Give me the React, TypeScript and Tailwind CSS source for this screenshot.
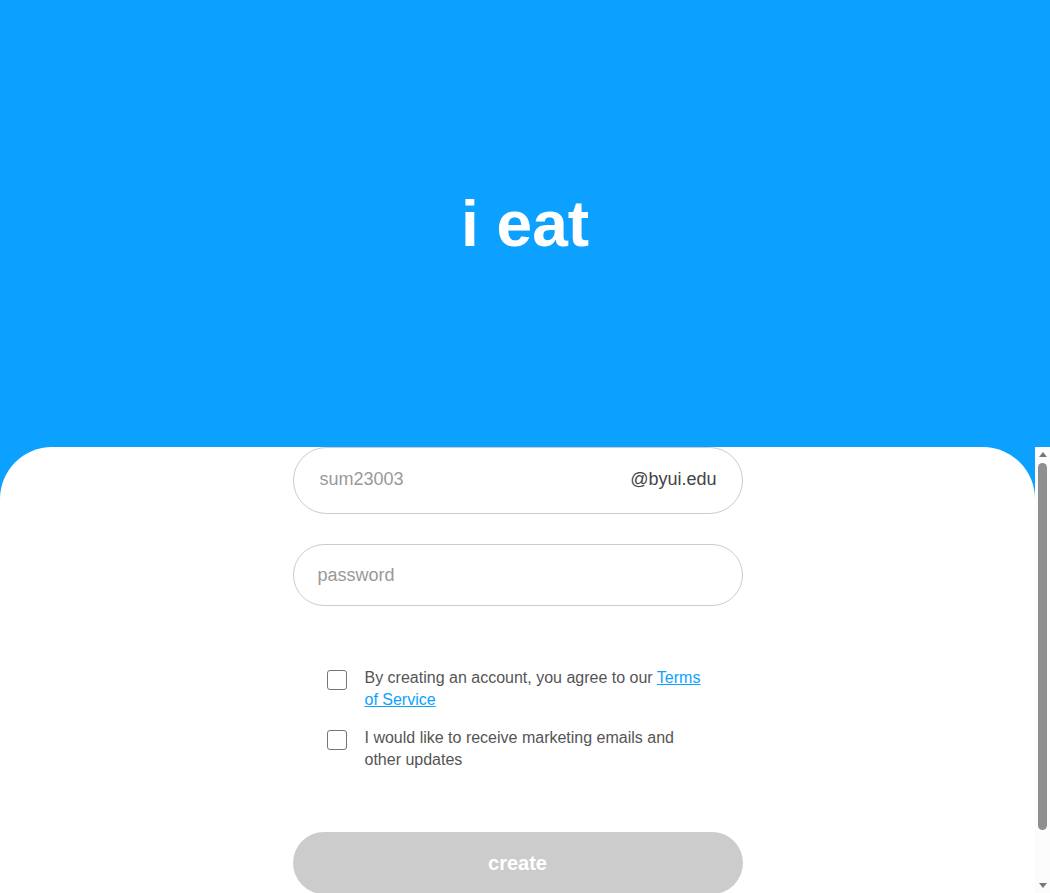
import React, { useState } from 'react';

const THUMB_HEIGHT = 367;
const TRACK_HEIGHT = 414;

const App: React.FC = () => {
  const [email, setEmail] = useState('');
  const [password, setPassword] = useState('');
  const [terms, setTerms] = useState(false);
  const [marketing, setMarketing] = useState(false);
  const [scrollRatio, setScrollRatio] = useState(0);

  const canCreate = email.trim() !== '' && password !== '' && terms;

  const handleScroll = (event: React.UIEvent<HTMLDivElement>) => {
    const el = event.currentTarget;
    const max = el.scrollHeight - el.clientHeight;
    setScrollRatio(max > 0 ? el.scrollTop / max : 0);
  };

  return (
    <div className="h-screen flex flex-col bg-[#0ca1ff] font-['Liberation_Sans',Arial,sans-serif]">
      <header className="h-[447px] shrink-0 flex items-center justify-center">
        <h1 className="text-[64px] font-bold text-white leading-none">i eat</h1>
      </header>
      <div className="flex-1 min-h-0 flex">
        <div onScroll={handleScroll} className="flex-1 overflow-y-auto [scrollbar-width:none]">
          <div className="bg-white rounded-t-[52px] min-h-full flex flex-col items-center pb-[60px]">
            <div className="w-[450px] flex flex-col">
              <div className="h-[67px] rounded-full border border-[#cccccc] flex items-center pl-[26px] pr-[25px] pb-[2px]">
                <input
                  type="text"
                  value={email}
                  onChange={event => setEmail(event.target.value)}
                  placeholder="sum23003"
                  className="flex-1 min-w-0 bg-transparent outline-none text-[18px] text-[#444] placeholder:text-[#999]"
                />
                <span className="text-[18px] text-[#444]">@byui.edu</span>
              </div>
              <input
                type="password"
                value={password}
                onChange={event => setPassword(event.target.value)}
                placeholder="password"
                className="mt-[30px] h-[62px] rounded-full border border-[#cccccc] px-[24px] outline-none text-[18px] text-[#444] placeholder:text-[#999]"
              />
              <div className="mt-[61px] flex flex-col gap-[16px] pl-[34px] pr-[36px]">
                <label className="flex items-start gap-[18px] text-[16px] leading-[22px] text-[#555]">
                  <input
                    type="checkbox"
                    checked={terms}
                    onChange={event => setTerms(event.target.checked)}
                    className="appearance-none shrink-0 mt-[3px] w-[20px] h-[20px] rounded-[3px] border border-[#767676] bg-white checked:bg-[#0ca1ff] checked:border-[#0ca1ff]"
                  />
                  <span>
                    By creating an account, you agree to our{' '}
                    <a href="#" className="text-[#0ca1ff] underline">Terms of Service</a>
                  </span>
                </label>
                <label className="flex items-start gap-[18px] text-[16px] leading-[22px] text-[#555]">
                  <input
                    type="checkbox"
                    checked={marketing}
                    onChange={event => setMarketing(event.target.checked)}
                    className="appearance-none shrink-0 mt-[3px] w-[20px] h-[20px] rounded-[3px] border border-[#767676] bg-white checked:bg-[#0ca1ff] checked:border-[#0ca1ff]"
                  />
                  <span>I would like to receive marketing emails and other updates</span>
                </label>
              </div>
              <button
                type="button"
                disabled={!canCreate}
                className="mt-[61px] h-[62px] rounded-full bg-[#cccccc] text-white text-[20px] font-bold enabled:bg-[#0ca1ff]"
              >
                create
              </button>
            </div>
          </div>
        </div>
        {/* scrollbar */}
        <div className="w-[15px] shrink-0 bg-[#fcfcfc] flex flex-col items-center">
          <div className="h-[15px] shrink-0 flex items-center justify-center">
            <svg width="8" height="5" viewBox="0 0 8 5">
              <path d="M4 0 L8 5 L0 5 Z" fill="#777" />
            </svg>
          </div>
          <div className="flex-1 min-h-0 w-full flex flex-col items-center">
            <div
              className="w-[9px] rounded-full bg-[#8f8f8f]"
              style={{ height: THUMB_HEIGHT, marginTop: 1 + scrollRatio * (TRACK_HEIGHT - THUMB_HEIGHT) }}
            />
          </div>
          <div className="h-[16px] shrink-0 flex items-center justify-center">
            <svg width="8" height="5" viewBox="0 0 8 5">
              <path d="M0 0 L8 0 L4 5 Z" fill="#777" />
            </svg>
          </div>
        </div>
      </div>
    </div>
  );
};

export default App;
